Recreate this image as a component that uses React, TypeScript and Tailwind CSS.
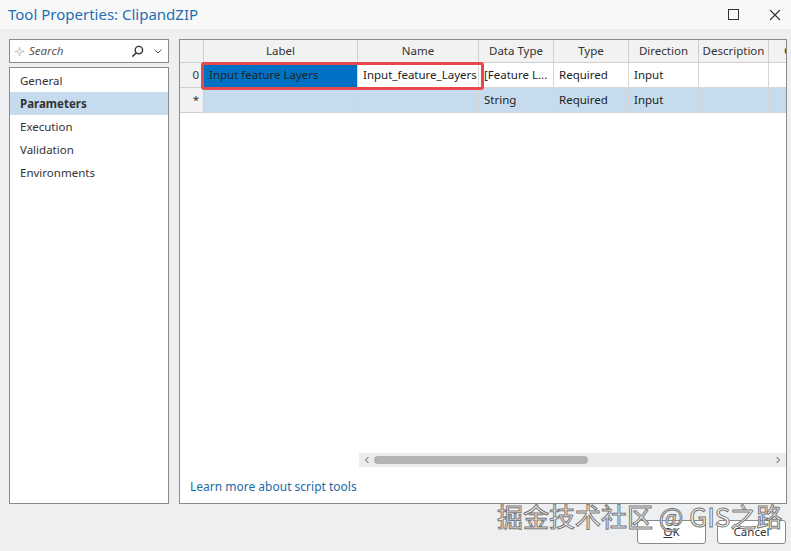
import React from "react";

const cols = [
  { name: "Label", w: "w-[154px]" },
  { name: "Name", w: "w-[121px]" },
  { name: "Data Type", w: "w-[75px]" },
  { name: "Type", w: "w-[75px]" },
  { name: "Direction", w: "w-[70px]" },
  { name: "Description", w: "w-[70px]" },
  { name: "Category", w: "w-[80px]" },
];

const rows = [
  { num: "0", cells: ["Input feature Layers", "Input_feature_Layers", "[Feature L...", "Required", "Input", "", ""] },
  { num: "*", cells: ["", "", "String", "Required", "Input", "", ""] },
];

const navItems = ["General", "Parameters", "Execution", "Validation", "Environments"];

export default function App() {
  return (
    <div className="w-[791px] h-[551px] overflow-hidden relative bg-[#eeeff1] text-[11.5px] text-[#222] font-['Noto_Sans','Open_Sans',sans-serif]">
      {/* title bar */}
      <div className="h-[29px] bg-[#f8f8f8] flex items-center pl-[8px] pr-[10px]">
        <div className="text-[15px] text-[#1f6fb0] leading-none">Tool Properties: ClipandZIP</div>
        <div className="ml-auto flex items-center gap-[29px]">
          <svg width="12" height="12" viewBox="0 0 12 12" className="text-[#333]">
            <rect x="0.5" y="0.5" width="10" height="10" fill="none" stroke="currentColor" strokeWidth="1" />
          </svg>
          <svg width="12" height="12" viewBox="0 0 12 12" className="text-[#333]">
            <path d="M1 1L11 11M11 1L1 11" stroke="currentColor" strokeWidth="1.1" />
          </svg>
        </div>
      </div>

      <div className="flex gap-[10px] pl-[9px] pt-[10px]">
        {/* left side */}
        <div className="w-[160px] flex flex-col gap-[4px]">
          <div className="h-[24px] bg-white border border-[#8a8a8a] flex items-center px-[4px]">
            <svg width="11" height="11" viewBox="0 0 12 12" className="text-[#b5b5b5]">
              <path d="M6 1L7 5L11 6L7 7L6 11L5 7L1 6L5 5Z" fill="none" stroke="currentColor" strokeWidth="0.8" />
            </svg>
            <span className="ml-[4px] italic text-[#555]">Search</span>
            <svg width="13" height="13" viewBox="0 0 14 14" className="ml-auto text-[#333]">
              <circle cx="8.5" cy="5.5" r="4" fill="none" stroke="currentColor" strokeWidth="1.5" />
              <path d="M5.6 8.4L1.5 12.5" stroke="currentColor" strokeWidth="1.6" />
            </svg>
            <svg width="10" height="10" viewBox="0 0 10 10" className="ml-[9px] mr-[1px] text-[#555]">
              <path d="M1.5 3.5L5 7L8.5 3.5" fill="none" stroke="currentColor" strokeWidth="1" />
            </svg>
          </div>
          <div className="h-[437px] bg-white border border-[#8a8a8a] flex flex-col pt-[1px]">
            {navItems.map((item) => (
              <div
                key={item}
                className={
                  item === "Parameters"
                    ? "h-[23px] flex items-center pl-[10px] bg-[#c6dcee] font-bold text-[#333]"
                    : "h-[23px] flex items-center pl-[10px] text-[#333]"
                }
              >
                {item}
              </div>
            ))}
          </div>
        </div>

        {/* right side */}
        <div className="w-[608px] h-[465px] bg-white border border-[#8a8a8a] flex flex-col">
          <div className="overflow-hidden">
            <div className="flex w-max">
              <div className="w-[24px] h-[23px] bg-[#f2f2f2] border-r border-b border-[#cfcfcf]" />
              {cols.map((c) => (
                <div
                  key={c.name}
                  className={`${c.w} h-[23px] bg-[#f2f2f2] border-r border-b border-[#cfcfcf] flex items-center justify-center text-[#333] whitespace-nowrap`}
                >
                  {c.name}
                </div>
              ))}
            </div>
            {rows.map((r, ri) => (
              <div key={r.num} className="flex w-max relative">
                <div className="w-[24px] h-[25px] bg-[#f2f2f2] border-r border-b border-[#cfcfcf] flex items-center justify-end pr-[4px] text-[#333]">
                  {r.num}
                </div>
                {r.cells.map((cell, ci) => {
                  let bg = ri === 1 ? "bg-[#c6dcee]" : "bg-white";
                  if (ri === 0 && ci === 0) bg = "bg-[#0072c6]";
                  return (
                    <div
                      key={ci}
                      className={`${cols[ci].w} h-[25px] ${bg} border-r border-b border-[#d6d6d6] flex items-center px-[5px] text-[#222] whitespace-nowrap overflow-hidden`}
                    >
                      {cell}
                    </div>
                  );
                })}
                {ri === 0 && (
                  <div className="absolute z-10 left-[21px] top-[-1px] w-[283px] h-[28px] border-[3px] border-[#e8474e] rounded-[3px]" />
                )}
              </div>
            ))}
          </div>
          <div className="flex-1" />
          <div className="ml-[179px] h-[14px] bg-[#ececec] flex items-center px-[5px]">
            <svg width="6" height="8" viewBox="0 0 6 8" className="text-[#555]">
              <path d="M4.5 1L1.5 4L4.5 7" fill="none" stroke="currentColor" strokeWidth="1" />
            </svg>
            <div className="ml-[4px] w-[214px] h-[8px] rounded-full bg-[#b3b3b3]" />
            <svg width="6" height="8" viewBox="0 0 6 8" className="ml-auto text-[#555]">
              <path d="M1.5 1L4.5 4L1.5 7" fill="none" stroke="currentColor" strokeWidth="1" />
            </svg>
          </div>
          <div className="h-[36px] flex items-center pl-[10px] pt-[4px]">
            <span className="text-[#1d6aa5] text-[12px]">Learn more about script tools</span>
          </div>
        </div>
      </div>

      {/* buttons */}
      <div className="flex justify-end gap-[11px] pr-[5px] pt-[16px]">
        <div className="w-[69px] h-[24px] bg-white border border-[#8a8a8a] rounded-[3px] flex items-center justify-center text-[#333]">
          <span><span className="underline">O</span>K</span>
        </div>
        <div className="w-[69px] h-[24px] bg-white border border-[#8a8a8a] rounded-[3px] flex items-center justify-center text-[#333]">
          Cancel
        </div>
      </div>

      {/* watermark */}
      <div className="absolute left-[497px] top-[503px] whitespace-nowrap text-[26px] leading-none text-white [-webkit-text-stroke:1px_#777] font-['Noto_Sans_CJK_SC',sans-serif]">
        掘金技术社区 @ GIS之路
      </div>
    </div>
  );
}
